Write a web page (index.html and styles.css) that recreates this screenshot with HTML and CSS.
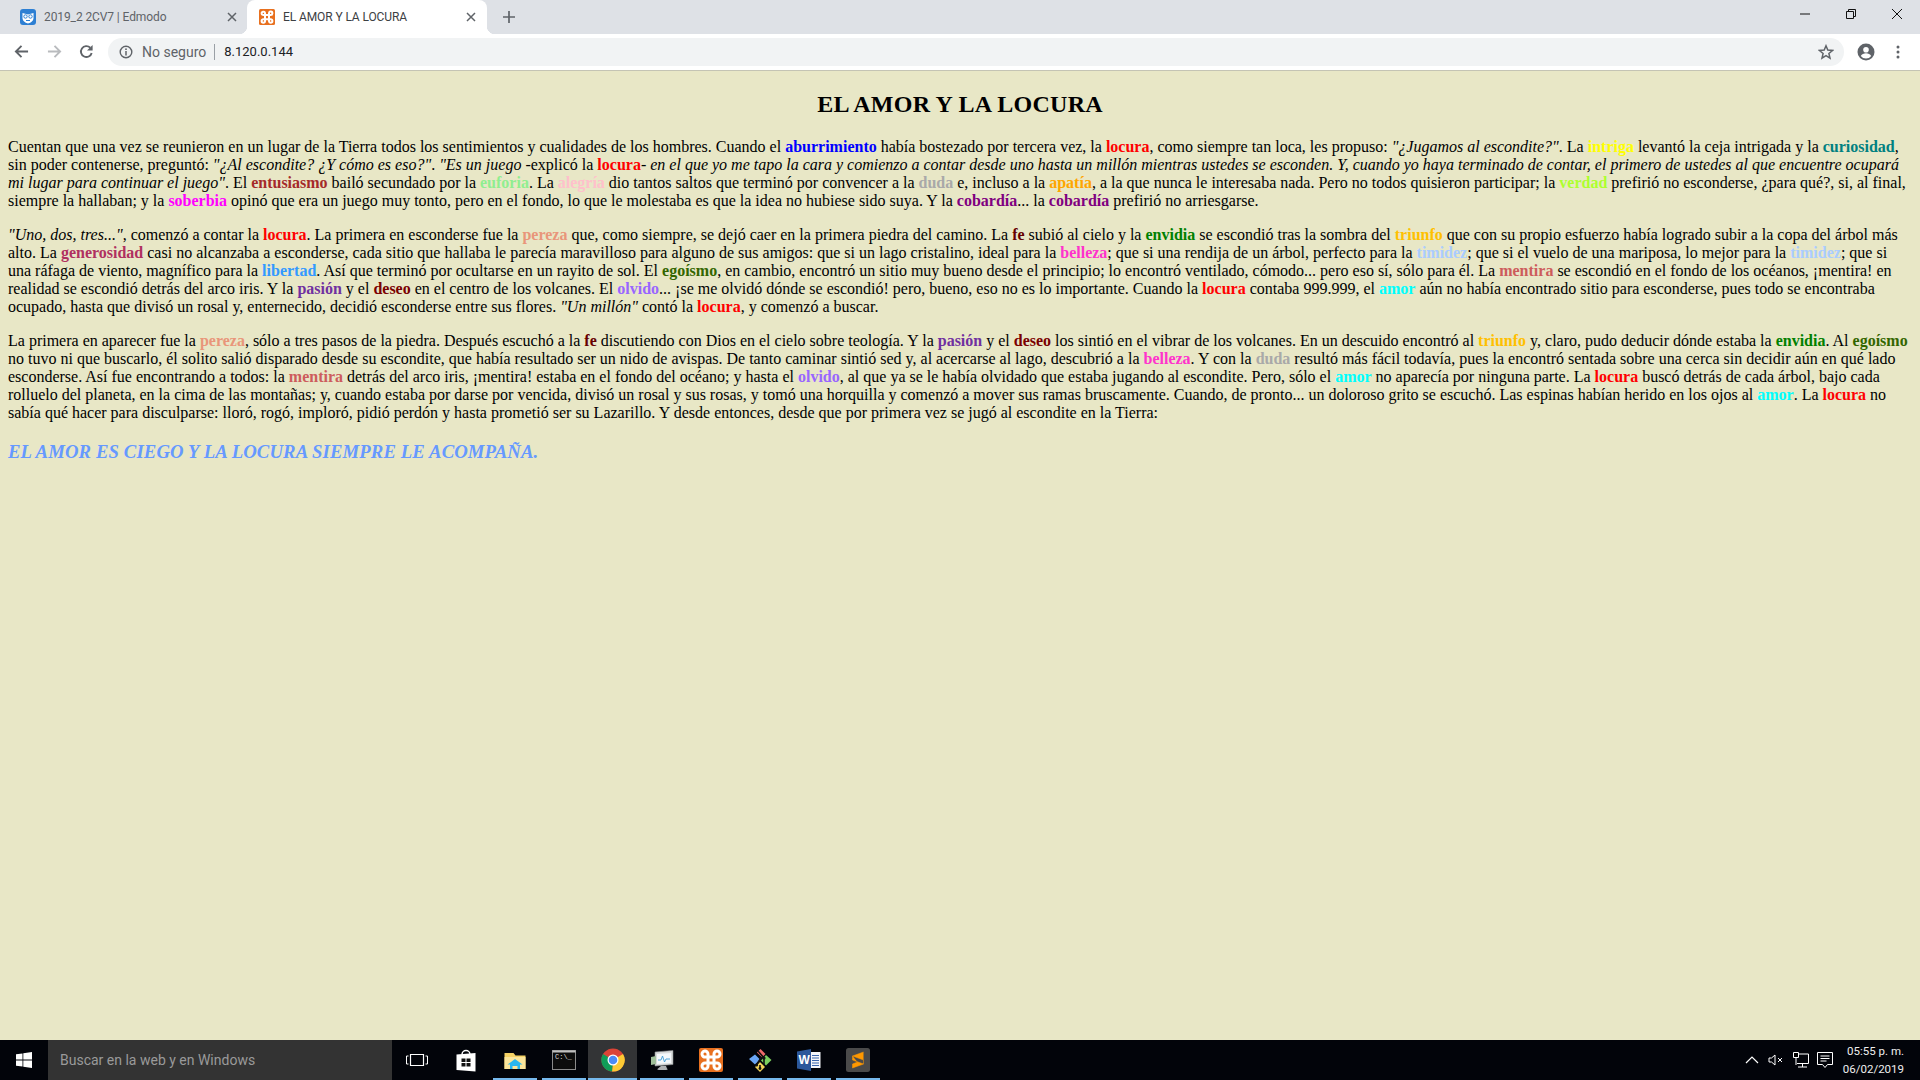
FILE: index.html
```html
<!DOCTYPE html>
<html lang="es">
<head>
<meta charset="utf-8">
<title>EL AMOR Y LA LOCURA</title>
<link rel="stylesheet" href="styles.css">
</head>
<body>
<div class="screen">
  <header class="tabstrip">
    <div class="tab">
      <svg class="favicon" viewBox="0 0 16 16"><rect width="16" height="16" rx="3" fill="#2d7fd3"/><path d="M2.5 4 L8 5.5 L13.500 4 V9.500 Q13 13 8 14.500 Q3 13 2.500 9.500 Z" fill="#fff"/><circle cx="5.500" cy="7.500" r="1.700" fill="none" stroke="#2d7fd3" stroke-width="1"/><circle cx="10.500" cy="7.500" r="1.700" fill="none" stroke="#2d7fd3" stroke-width="1"/><path d="M6 11.500h4" stroke="#2d7fd3"/></svg>
      <span class="tab-title">2019_2 2CV7 | Edmodo</span>
      <svg class="tab-close" viewBox="0 0 10 10"><path d="M1 1l8 8M9 1l-8 8" stroke="#5f6368" stroke-width="1.500"/></svg>
    </div>
    <div class="tab tab-active">
      <svg class="favicon" viewBox="0 0 16 16"><rect width="16" height="16" rx="1.500" fill="#e8701f"/><path d="M6 6H4.700a1.700 1.700 0 1 1 1.300-2V12a1.700 1.700 0 1 1-1.700-1.700H11.700A1.700 1.700 0 1 1 10 12V4a1.700 1.700 0 1 1 1.700 2H6" fill="none" stroke="#fff" stroke-width="2"/></svg>
      <span class="tab-title">EL AMOR Y LA LOCURA</span>
      <svg class="tab-close" viewBox="0 0 10 10"><path d="M1 1l8 8M9 1l-8 8" stroke="#5f6368" stroke-width="1.500"/></svg>
    </div>
    <svg class="new-tab" viewBox="0 0 12 12"><path d="M6 0v12M0 6h12" stroke="#5f6368" stroke-width="1.700"/></svg>
    <div class="window-controls">
      <svg class="win-btn" viewBox="0 0 12 12"><path d="M1 6h10" stroke="#111" stroke-width="1"/></svg>
      <svg class="win-btn" viewBox="0 0 12 12"><path d="M1.500 3.500h7v7h-7zM3.500 3.500v-2h7v7h-2" fill="none" stroke="#111" stroke-width="1"/></svg>
      <svg class="win-btn" viewBox="0 0 12 12"><path d="M1 1l10 10M11 1L1 11" stroke="#111" stroke-width="1"/></svg>
    </div>
  </header>

  <nav class="toolbar">
    <svg class="nav-icon nav-back" viewBox="0 0 16 16"><path d="M15 8H2M8 2L2 8l6 6" fill="none" stroke="#5f6368" stroke-width="2"/></svg>
    <svg class="nav-icon nav-forward" viewBox="0 0 16 16"><path d="M1 8h13M8 2l6 6-6 6" fill="none" stroke="#b9bbbe" stroke-width="2"/></svg>
    <svg class="nav-icon nav-reload" viewBox="0 0 16 16"><path d="M13.500 9.500A5.800 5.800 0 1 1 12 4" fill="none" stroke="#5f6368" stroke-width="2"/><path d="M14.500 1v6h-6z" fill="#5f6368"/></svg>
    <div class="omnibox">
      <svg class="info-icon" viewBox="0 0 14 14"><circle cx="7" cy="7" r="5.800" fill="none" stroke="#5f6368" stroke-width="1.400"/><path d="M7 6v4.500" stroke="#5f6368" stroke-width="1.500"/><circle cx="7" cy="4.200" r=".9" fill="#5f6368"/></svg>
      <span class="not-secure">No seguro</span>
      <span class="omni-sep"></span>
      <span class="url">8.120.0.144</span>
      <svg class="star" viewBox="0 0 16 16"><path d="M8 1.800l1.800 4.300 4.700.4-3.600 3 1.100 4.600L8 11.700l-4 2.400 1.100-4.600-3.600-3 4.700-.4z" fill="none" stroke="#5f6368" stroke-width="1.500"/></svg>
    </div>
    <svg class="avatar" viewBox="0 0 18 18"><circle cx="9" cy="9" r="8.500" fill="#5f6368"/><circle cx="9" cy="6.700" r="2.800" fill="#fff"/><path d="M3.800 13c1-2 3-2.800 5.200-2.800s4.200.8 5.200 2.800a6.500 6.500 0 0 1-10.400 0z" fill="#fff"/></svg>
    <svg class="menu-dots" viewBox="0 0 4 14"><circle cx="2" cy="2" r="1.500" fill="#5f6368"/><circle cx="2" cy="7" r="1.500" fill="#5f6368"/><circle cx="2" cy="12" r="1.500" fill="#5f6368"/></svg>
  </nav>

  <main class="page">
    <h2 class="title">EL AMOR Y LA LOCURA</h2>
    <p>Cuentan que una vez se reunieron en un lugar de la Tierra todos los sentimientos y cualidades de los hombres. Cuando el <b class="aburrimiento">aburrimiento</b> había bostezado por tercera vez, la <b class="locura">locura</b>, como siempre tan loca, les propuso: <i>"¿Jugamos al escondite?"</i>. La <b class="intriga">intriga</b> levantó la ceja intrigada y la <b class="curiosidad">curiosidad</b>, sin poder contenerse, preguntó: <i>"¿Al escondite? ¿Y cómo es eso?"</i>. <i>"Es un juego</i> -explicó la <b class="locura">locura</b>- <i>en el que yo me tapo la cara y comienzo a contar desde uno hasta un millón mientras ustedes se esconden. Y, cuando yo haya terminado de contar, el primero de ustedes al que encuentre ocupará mi lugar para continuar el juego"</i>. El <b class="entusiasmo">entusiasmo</b> bailó secundado por la <b class="euforia">euforia</b>. La <b class="alegria">alegría</b> dio tantos saltos que terminó por convencer a la <b class="duda">duda</b> e, incluso a la <b class="apatia">apatía</b>, a la que nunca le interesaba nada. Pero no todos quisieron participar; la <b class="verdad">verdad</b> prefirió no esconderse, ¿para qué?, si, al final, siempre la hallaban; y la <b class="soberbia">soberbia</b> opinó que era un juego muy tonto, pero en el fondo, lo que le molestaba es que la idea no hubiese sido suya. Y la <b class="cobardia">cobardía</b>... la <b class="cobardia">cobardía</b> prefirió no arriesgarse.</p>
    <p><i>"Uno, dos, tres..."</i>, comenzó a contar la <b class="locura">locura</b>. La primera en esconderse fue la <b class="pereza">pereza</b> que, como siempre, se dejó caer en la primera piedra del camino. La <b class="fe">fe</b> subió al cielo y la <b class="envidia">envidia</b> se escondió tras la sombra del <b class="triunfo">triunfo</b> que con su propio esfuerzo había logrado subir a la copa del árbol más alto. La <b class="generosidad">generosidad</b> casi no alcanzaba a esconderse, cada sitio que hallaba le parecía maravilloso para alguno de sus amigos: que si un lago cristalino, ideal para la <b class="belleza">belleza</b>; que si una rendija de un árbol, perfecto para la <b class="timidez">timidez</b>; que si el vuelo de una mariposa, lo mejor para la <b class="timidez">timidez</b>; que si una ráfaga de viento, magnífico para la <b class="libertad">libertad</b>. Así que terminó por ocultarse en un rayito de sol. El <b class="egoismo">egoísmo</b>, en cambio, encontró un sitio muy bueno desde el principio; lo encontró ventilado, cómodo... pero eso sí, sólo para él. La <b class="mentira">mentira</b> se escondió en el fondo de los océanos, ¡mentira! en realidad se escondió detrás del arco iris. Y la <b class="pasion">pasión</b> y el <b class="deseo">deseo</b> en el centro de los volcanes. El <b class="olvido">olvido</b>... ¡se me olvidó dónde se escondió! pero, bueno, eso no es lo importante. Cuando la <b class="locura">locura</b> contaba 999.999, el <b class="amor">amor</b> aún no había encontrado sitio para esconderse, pues todo se encontraba ocupado, hasta que divisó un rosal y, enternecido, decidió esconderse entre sus flores. <i>"Un millón"</i> contó la <b class="locura">locura</b>, y comenzó a buscar.</p>
    <p>La primera en aparecer fue la <b class="pereza">pereza</b>, sólo a tres pasos de la piedra. Después escuchó a la <b class="fe">fe</b> discutiendo con Dios en el cielo sobre teología. Y la <b class="pasion">pasión</b> y el <b class="deseo">deseo</b> los sintió en el vibrar de los volcanes. En un descuido encontró al <b class="triunfo">triunfo</b> y, claro, pudo deducir dónde estaba la <b class="envidia">envidia</b>. Al <b class="egoismo">egoísmo</b> no tuvo ni que buscarlo, él solito salió disparado desde su escondite, que había resultado ser un nido de avispas. De tanto caminar sintió sed y, al acercarse al lago, descubrió a la <b class="belleza">belleza</b>. Y con la <b class="duda">duda</b> resultó más fácil todavía, pues la encontró sentada sobre una cerca sin decidir aún en qué lado esconderse. Así fue encontrando a todos: la <b class="mentira">mentira</b> detrás del arco iris, ¡mentira! estaba en el fondo del océano; y hasta el <b class="olvido">olvido</b>, al que ya se le había olvidado que estaba jugando al escondite. Pero, sólo el <b class="amor">amor</b> no aparecía por ninguna parte. La <b class="locura">locura</b> buscó detrás de cada árbol, bajo cada rolluelo del planeta, en la cima de las montañas; y, cuando estaba por darse por vencida, divisó un rosal y sus rosas, y tomó una horquilla y comenzó a mover sus ramas bruscamente. Cuando, de pronto... un doloroso grito se escuchó. Las espinas habían herido en los ojos al <b class="amor">amor</b>. La <b class="locura">locura</b> no sabía qué hacer para disculparse: lloró, rogó, imploró, pidió perdón y hasta prometió ser su Lazarillo. Y desde entonces, desde que por primera vez se jugó al escondite en la Tierra:</p>
    <h3 class="moral">EL AMOR ES CIEGO Y LA LOCURA SIEMPRE LE ACOMPAÑA.</h3>
  </main>

  <footer class="taskbar">
    <div class="start">
      <svg class="start-logo" viewBox="0 0 16 16"><path d="M0 2.300l6.500-.9V7.600H0zM7.300 1.300L16 0v7.600H7.300zM0 8.400h6.500v6.200L0 13.700zM7.300 8.400H16V16l-8.700-1.300z" fill="#fff"/></svg>
    </div>
    <div class="search">Buscar en la web y en Windows</div>
    <div class="task-items">
      <div class="task-item">
        <svg class="ti" viewBox="0 0 24 24"><path d="M5.500 6.500h13v11h-13z" fill="none" stroke="#fff" stroke-width="1.200"/><path d="M3.500 8H1.500v8h2M20.500 8h2v8h-2" fill="none" stroke="#fff"/></svg>
      </div>
      <div class="task-item">
        <svg class="ti" viewBox="0 0 24 24"><path d="M2.500 6.500L21.500 5v18.500L2.500 22z" fill="#fff"/><path d="M8 6.500a4 4 0 0 1 8 0" fill="none" stroke="#fff" stroke-width="1.500"/><path d="M7.500 10.500h4v3.500h-4zM12.500 10.500h4v3.500h-4zM7.500 15h4v3.500h-4zM12.500 15h4v3.500h-4z" fill="#111"/></svg>
      </div>
      <div class="task-item is-open">
        <svg class="ti" viewBox="0 0 24 24"><path d="M1.500 5h9l2 2.500h10V21h-21z" fill="#f5d264"/><path d="M1.500 9h21v12h-21z" fill="#fbe59a"/><path d="M7 21v-4.500H4.500L12 11l7.500 5.500H17V21z" fill="#29b6ee"/><path d="M9.500 21v-3h5v3z" fill="#fbe59a"/></svg>
      </div>
      <div class="task-item is-open">
        <svg class="ti" viewBox="0 0 24 24"><rect x=".5" y="2.500" width="23" height="19" fill="#0c0c0c" stroke="#8a8a8a"/><path d="M.5 2.500h23v2h-23z" fill="#c0c0c0"/><text x="3" y="11" class="cmd-text">C:\_</text></svg>
      </div>
      <div class="task-item is-open is-active">
        <svg class="ti" viewBox="0 0 24 24"><circle cx="12" cy="12" r="11.500" fill="#db4437"/><path d="M12 12L22 6A11.500 11.500 0 0 1 11 23.500z" fill="#fcc934"/><path d="M12 12L11 23.500A11.500 11.500 0 0 1 2 6z" fill="#0f9d58"/><circle cx="12" cy="12" r="5.500" fill="#fff"/><circle cx="12" cy="12" r="4.300" fill="#4c8bf5"/></svg>
      </div>
      <div class="task-item is-open">
        <svg class="ti" viewBox="0 0 24 24"><path d="M5 4l18-1.500v14L5 18z" fill="#d8dadb" stroke="#85898b" stroke-width=".6"/><path d="M7 6l14-1v10L7 16z" fill="#f4f8fb"/><path d="M8 12h3l1.500-4 2 6 1.500-3h4" fill="none" stroke="#3d9bd6" stroke-width=".9"/><path d="M1 9l5-1v8l-5 1z" fill="#9fbf9a"/><path d="M11 18h5l1 2.500c1 .5 1 1.500-1 1.500H9c-2 0-2-1-1-1.500z" fill="#aeb1b3"/></svg>
      </div>
      <div class="task-item is-open">
        <svg class="ti" viewBox="0 0 24 24"><rect width="24" height="24" rx="2" fill="#e8701f"/><path d="M9 9H6.500a3 3 0 1 1 2.500-3V18a3 3 0 1 1-3-3H18a3 3 0 1 1-3 3V6a3 3 0 1 1 3 3H9" fill="none" stroke="#fff" stroke-width="3"/></svg>
      </div>
      <div class="task-item is-open">
        <svg class="ti" viewBox="0 0 24 24"><path d="M9 4.500l3.500-3.500 5 5-3.500 3.500z" fill="#f06a6a"/><path d="M7 6.500l5 5-5 5-6-5.500z" fill="#6aa5f5"/><path d="M18 7l5.500 5-5.500 5.500-5-5z" fill="#7ccf5f"/><path d="M12 14l5 5-5 5-5-5z" fill="#f4d35a"/><path d="M10 3l6 7v7M13.500 9L8.500 17M12 17v4" fill="none" stroke="#111" stroke-width="1.600"/><circle cx="16" cy="10" r="1.600" fill="#111"/><circle cx="8.500" cy="17" r="1.600" fill="#111"/><circle cx="12" cy="20.500" r="1.400" fill="#111"/></svg>
      </div>
      <div class="task-item is-open">
        <svg class="ti" viewBox="0 0 24 24"><path d="M13 4h10.500v16H13z" fill="#f4f6fa"/><path d="M15 7.500h7M15 10h7M15 12.500h7M15 15h7M15 17.500h7" stroke="#3a66ad"/><path d="M0 3.500L14 1v22L0 20.500z" fill="#2b579a"/><text x="1.500" y="16" class="word-text">W</text></svg>
      </div>
      <div class="task-item is-open">
        <svg class="ti" viewBox="0 0 24 24"><rect width="24" height="24" rx="2.500" fill="#4a4a4a"/><path d="M17.500 4L6.500 8v4l11 4M6.500 8l11 4v4l-11 4v-4l5-2" fill="#ff9800" stroke="#ff9800" stroke-width=".5"/></svg>
      </div>
    </div>
    <div class="tray">
      <svg class="tray-icon" viewBox="0 0 16 16"><path d="M2 11l6-6 6 6" fill="none" stroke="#fff" stroke-width="1.200"/></svg>
      <svg class="tray-icon" viewBox="0 0 16 16"><path d="M1 6h2.500L7 3v10L3.500 10H1z" fill="none" stroke="#fff"/><path d="M10 6l4 4M14 6l-4 4" stroke="#fff"/></svg>
      <svg class="tray-icon tray-wide" viewBox="0 0 18 18"><path d="M5 3h11.500v9.500H5M10.500 12.500V16M6 16h9" fill="none" stroke="#fff"/><path d="M1.500 1.500h5v5h-5zM4 6.500V14" fill="#000" stroke="#fff"/></svg>
      <svg class="tray-icon tray-wide" viewBox="0 0 18 18"><path d="M1.500 1.500h15v12h-5l-2.500 3-2.500-3h-5z" fill="none" stroke="#fff"/><path d="M4.500 5h9M4.500 7.500h9M4.500 10h6" stroke="#fff"/></svg>
      <div class="clock"><span>05:55 p. m.</span><span>06/02/2019</span></div>
    </div>
  </footer>
</div>
</body>
</html>
```
FILE: styles.css
```css
* { box-sizing: border-box; }
html, body { margin: 0; height: 100%; }
.screen { display: flex; flex-direction: column; width: 1920px; height: 1080px; overflow: hidden; }

.tabstrip { display: flex; align-items: center; height: 34px; flex: none; background: #dee1e6; font: 12px Roboto, "Liberation Sans", sans-serif; color: #5f6368; }
.tab { display: flex; align-items: center; width: 247px; height: 34px; padding: 0 10px 0 20px; }
.tab-active { position: relative; width: 240px; padding: 0 11px 0 12px; background: #fff; border-radius: 8px 8px 0 0; color: #3c4043; }
.tab-active::before, .tab-active::after { content: ""; position: absolute; bottom: 0; width: 8px; height: 8px; }
.tab-active::before { left: -8px; background: radial-gradient(circle at 0 0, transparent 8px, #fff 8.500px); }
.tab-active::after { right: -8px; background: radial-gradient(circle at 100% 0, transparent 8px, #fff 8.500px); }
.favicon { width: 16px; height: 16px; flex: none; margin-right: 8px; }
.tab-title { flex: 1; white-space: nowrap; overflow: hidden; letter-spacing: -.1px; }
.tab-close { width: 10px; height: 10px; flex: none; }
.new-tab { width: 12px; height: 12px; margin-left: 16px; flex: none; }
.window-controls { display: flex; align-items: center; gap: 34px; margin-left: auto; margin-right: 17px; padding-bottom: 6px; }
.win-btn { width: 12px; height: 12px; }

.toolbar { display: flex; align-items: center; height: 37px; flex: none; padding: 0 0 1px 14px; background: #fff; border-bottom: 1px solid #c4c4b4; }
.nav-icon { width: 15px; height: 15px; flex: none; }
.nav-forward { margin-left: 18px; }
.nav-reload { margin-left: 17px; }
.omnibox { display: flex; align-items: center; flex: 1; height: 28px; margin-left: 14px; padding: 0 10px 0 11px; background: #f1f3f4; border-radius: 14px; font: 13px Roboto, "Liberation Sans", sans-serif; }
.info-icon { width: 14px; height: 14px; flex: none; margin-right: 9px; }
.not-secure { color: #5f6368; font-size: 14px; }
.omni-sep { width: 1px; height: 16px; margin: 0 9px 0 8px; background: #9aa0a6; }
.url { color: #202124; flex: 1; }
.star { width: 16px; height: 16px; flex: none; }
.avatar { width: 18px; height: 18px; flex: none; margin-left: 13px; }
.menu-dots { width: 4px; height: 14px; flex: none; margin: 0 20px 0 21px; }

.page { flex: 1; padding: 8px; background: #e8e7c6; color: #000; font: 16px/18px "Liberation Serif", "Times New Roman", serif; overflow: hidden; }
.page p { margin: 16px 0; }
.title { margin: 12px 0 20px; font-size: 24px; line-height: 27px; font-weight: bold; text-align: center; letter-spacing: .25px; }
.moral { margin: 18.720px 0; font-size: 18.720px; line-height: 21px; font-weight: bold; font-style: italic; letter-spacing: .12px; color: #6699ff; }

.aburrimiento { color: #0000ff; }
.locura { color: #ff0000; }
.intriga { color: #ffff00; }
.curiosidad { color: #008080; }
.entusiasmo { color: #a52a2a; }
.euforia { color: #90ee90; }
.alegria { color: #ffc0cb; }
.duda { color: #a9a9a9; }
.apatia { color: #ffa500; }
.verdad { color: #adff2f; }
.soberbia { color: #ff00ff; }
.cobardia { color: #800080; }
.pereza { color: #e9967a; }
.fe { color: #660000; }
.envidia { color: #008000; }
.triunfo { color: #ffc000; }
.belleza { color: #ff33cc; }
.timidez { color: #aaccff; }
.generosidad { color: #b03060; }
.libertad { color: #3399ff; }
.egoismo { color: #336600; }
.pasion { color: #7030a0; }
.deseo { color: #7a0000; }
.olvido { color: #9966ff; }
.mentira { color: #cd5c5c; }
.amor { color: #00ffff; }

.taskbar { display: flex; align-items: stretch; height: 40px; flex: none; background: #02040a; color: #fff; }
.start { display: flex; align-items: center; justify-content: center; width: 48px; flex: none; }
.start-logo { width: 16px; height: 16px; }
.search { display: flex; align-items: center; width: 344px; flex: none; padding-left: 12px; background: #333333; color: #9a9a9a; font: 14px Roboto, "Liberation Sans", sans-serif; }
.task-items { display: flex; }
.task-item { display: flex; align-items: center; justify-content: center; width: 49px; flex: none; border-bottom: 2px solid transparent; padding-top: 2px; }
.is-open { border-image: linear-gradient(90deg, transparent 5px, #76b9ed 5px, #76b9ed 45px, transparent 45px) 2; }
.is-active { background: #333436; border-image: linear-gradient(#76b9ed, #76b9ed) 2; }
.ti { width: 24px; height: 24px; }
.cmd-text { font: 7px "Liberation Mono", monospace; fill: #ddd; }
.word-text { font: bold 12px "Liberation Sans", sans-serif; fill: #fff; }
.tray { display: flex; align-items: center; margin-left: auto; padding-right: 16px; }
.tray-icon { width: 16px; height: 16px; flex: none; margin-right: 8px; }
.tray-wide { width: 18px; height: 18px; margin-right: 6px; }
.clock { display: flex; flex-direction: column; align-items: flex-end; width: 57px; margin-left: 7px; font: 11.500px/18px Roboto, "Liberation Sans", sans-serif; color: #eee; white-space: nowrap; }
```
